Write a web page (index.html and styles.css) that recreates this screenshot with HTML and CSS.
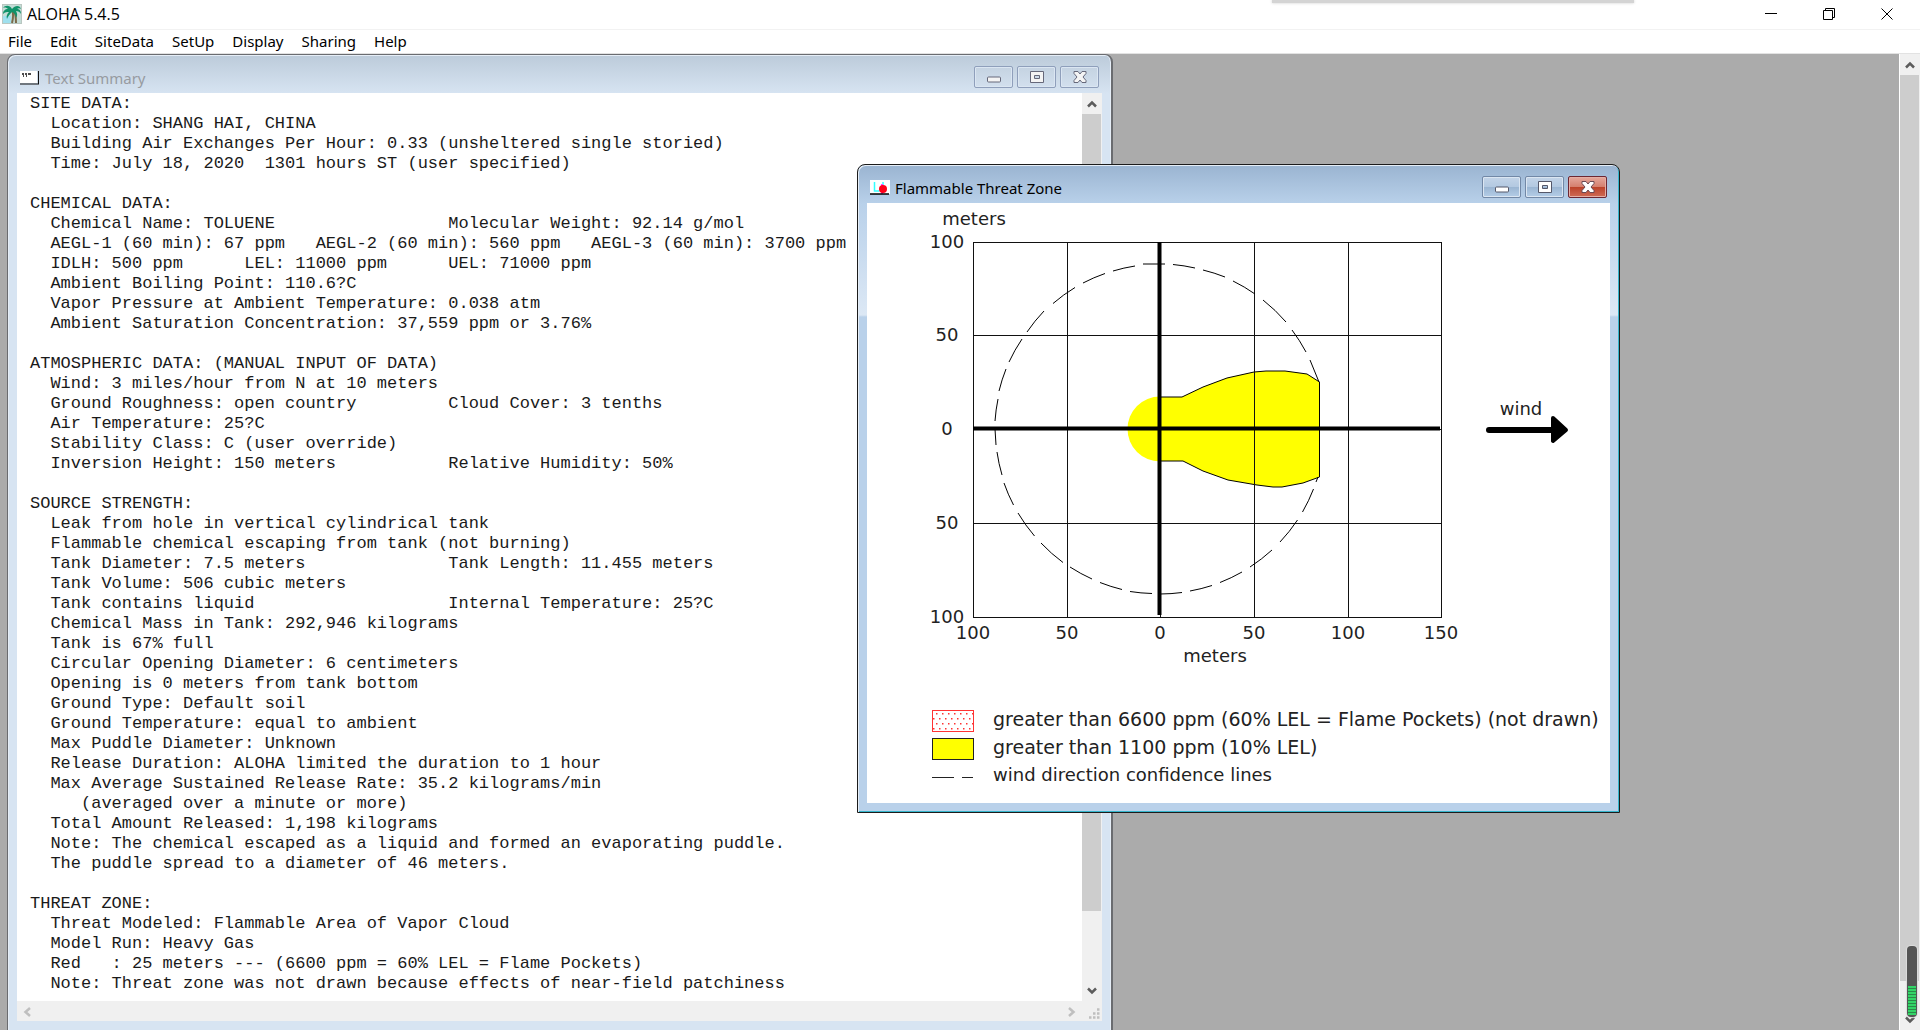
FILE: index.html
```html
<!DOCTYPE html>
<html lang="en">
<head>
    <meta charset="UTF-8">
    <meta name="viewport" content="width=device-width, initial-scale=1.0">
    <title>ALOHA 5.4.5</title>
    <link rel="stylesheet" href="styles.css">
</head>
<body>
    <!-- Title bar -->
    <header class="title-bar">
        <svg class="app-icon" viewBox="0 0 20 20">
            <rect width="20" height="20" fill="#b9c7c1"/>
            <rect x="1" y="1" width="18" height="18" fill="#c4dcd6"/>
            <path d="M1 12h8v7H1z" fill="#9fe0ee"/>
            <path d="M10 6c2 4 1 9 0 13M12 7c2 4 2 8 2 12" fill="none" stroke="#7b6a4a" stroke-width="2"/>
            <path d="M10 5C8 1 3 1 1 4c2-1 4 0 5 1-3 0-5 2-5 5 2-2 4-2 6-2-2 2-3 4-2 7 1-3 3-5 5-7 3 1 4 4 4 6 2-3 1-5 0-7 2 0 4 1 5 3 0-4-2-5-4-5 1-1 3-1 4 0-1-4-6-4-9 0z" fill="#12936a"/>
        </svg>
        <h1>ALOHA 5.4.5</h1>
        <div class="window-controls">
            <button type="button" aria-label="Minimize">
                <svg viewBox="0 0 12 12"><path d="M0 5.5h12" stroke="#000" fill="none"/></svg>
            </button>
            <button type="button" aria-label="Restore">
                <svg viewBox="0 0 12 12"><path d="M.5 2.5h9v9h-9zM2.500 2.500v-2h9v9h-2" stroke="#000" fill="none"/></svg>
            </button>
            <button type="button" aria-label="Close">
                <svg viewBox="0 0 12 12"><path d="M.5.5l11 11M11.500.5l-11 11" stroke="#000" fill="none"/></svg>
            </button>
        </div>
        <div class="behind-shadow"></div>
    </header>

    <nav class="menu-bar">
        <button type="button">File</button>
        <button type="button">Edit</button>
        <button type="button">SiteData</button>
        <button type="button">SetUp</button>
        <button type="button">Display</button>
        <button type="button">Sharing</button>
        <button type="button">Help</button>
    </nav>

    <main class="workspace">
        <div class="desktop">
            <!-- Text Summary window -->
            <section class="window summary-window">
                <div class="window-title">
                    <svg class="window-icon" viewBox="0 0 20 16">
                        <path d="M0 1h17v12H0z" fill="#fff"/>
                        <path d="M0 14h19M18.500 1v13" stroke="#111" fill="none"/>
                        <path d="M2 4h2M5 4h2M8 4h3M3 6h1M6 6h1" stroke="#111" stroke-width="1.500"/>
                    </svg>
                    <h2>Text Summary</h2>
                    <div class="frame-buttons">
                        <button type="button" aria-label="Minimize">
                            <svg viewBox="0 0 16 14"><rect x="1.500" y="7" width="13" height="5" rx="1" fill="#f4f4f4" stroke="#66687a"/></svg>
                        </button>
                        <button type="button" aria-label="Maximize">
                            <svg viewBox="0 0 16 14"><path d="M1.500 1.500h13v11h-13zM5.500 5.500v3h5v-3z" fill="#f4f4f4" stroke="#66687a" fill-rule="evenodd"/></svg>
                        </button>
                        <button type="button" aria-label="Close" class="frame-close">
                            <svg viewBox="0 0 16 14"><path d="M2 1.500h4l2 2.500 2-2.500h4v2L11 7l3 3.500v2h-4L8 10l-2 2.500H2v-2L5 7 2 3.500z" fill="#f4f4f4" stroke="#66687a"/></svg>
                        </button>
                    </div>
                </div>
                <div class="window-client summary-client">
<pre class="summary-text">SITE DATA:
  Location: SHANG HAI, CHINA
  Building Air Exchanges Per Hour: 0.33 (unsheltered single storied)
  Time: July 18, 2020  1301 hours ST (user specified)

CHEMICAL DATA:
  Chemical Name: TOLUENE                 Molecular Weight: 92.14 g/mol
  AEGL-1 (60 min): 67 ppm   AEGL-2 (60 min): 560 ppm   AEGL-3 (60 min): 3700 ppm
  IDLH: 500 ppm      LEL: 11000 ppm      UEL: 71000 ppm
  Ambient Boiling Point: 110.6?C
  Vapor Pressure at Ambient Temperature: 0.038 atm
  Ambient Saturation Concentration: 37,559 ppm or 3.76%

ATMOSPHERIC DATA: (MANUAL INPUT OF DATA)
  Wind: 3 miles/hour from N at 10 meters
  Ground Roughness: open country         Cloud Cover: 3 tenths
  Air Temperature: 25?C
  Stability Class: C (user override)
  Inversion Height: 150 meters           Relative Humidity: 50%

SOURCE STRENGTH:
  Leak from hole in vertical cylindrical tank
  Flammable chemical escaping from tank (not burning)
  Tank Diameter: 7.5 meters              Tank Length: 11.455 meters
  Tank Volume: 506 cubic meters
  Tank contains liquid                   Internal Temperature: 25?C
  Chemical Mass in Tank: 292,946 kilograms
  Tank is 67% full
  Circular Opening Diameter: 6 centimeters
  Opening is 0 meters from tank bottom
  Ground Type: Default soil
  Ground Temperature: equal to ambient
  Max Puddle Diameter: Unknown
  Release Duration: ALOHA limited the duration to 1 hour
  Max Average Sustained Release Rate: 35.2 kilograms/min
     (averaged over a minute or more)
  Total Amount Released: 1,198 kilograms
  Note: The chemical escaped as a liquid and formed an evaporating puddle.
  The puddle spread to a diameter of 46 meters.

THREAT ZONE:
  Threat Modeled: Flammable Area of Vapor Cloud
  Model Run: Heavy Gas
  Red   : 25 meters --- (6600 ppm = 60% LEL = Flame Pockets)
  Note: Threat zone was not drawn because effects of near-field patchiness</pre>
                    <div class="scrollbar">
                        <button type="button" aria-label="Scroll up">
                            <svg viewBox="0 0 10 10"><path d="M1 7.500l4-4 4 4" fill="none" stroke="#5c5c5c" stroke-width="2.500"/></svg>
                        </button>
                        <div class="scroll-track"><div class="scroll-thumb summary-thumb"></div></div>
                        <button type="button" aria-label="Scroll down">
                            <svg viewBox="0 0 10 10"><path d="M1 2.500l4 4 4-4" fill="none" stroke="#5c5c5c" stroke-width="2.500"/></svg>
                        </button>
                    </div>
                    <div class="scrollbar-horizontal">
                        <button type="button" aria-label="Scroll left">
                            <svg viewBox="0 0 10 10"><path d="M8 1L3.500 5 8 9" fill="none" stroke="#bfbfbf" stroke-width="2.500"/></svg>
                        </button>
                        <button type="button" aria-label="Scroll right">
                            <svg viewBox="0 0 10 10"><path d="M2 1l4.500 4L2 9" fill="none" stroke="#bfbfbf" stroke-width="2.500"/></svg>
                        </button>
                    </div>
                    <svg class="size-grip" viewBox="0 0 20 20">
                        <path d="M7 16.500h2.500M11 16.500h2.500M15 16.500h2.500M11 12.500h2.500M15 12.500h2.500M15 8.500h2.500" stroke="#bfbfbf" stroke-width="2.500"/>
                    </svg>
                </div>
            </section>

            <!-- Flammable Threat Zone window -->
            <section class="window threat-window active">
                <div class="window-title">
                    <svg class="window-icon" viewBox="0 0 20 16">
                        <path d="M0 0h20v14H0z" fill="#fff"/>
                        <path d="M4.500 2v9h5M13 2v4" stroke="#3ff" stroke-width="1.500" fill="none"/>
                        <path d="M12 4v10" stroke="#f4f" stroke-width="2"/>
                        <circle cx="13" cy="9" r="4" fill="#ff0018"/>
                        <path d="M0 14h19" stroke="#000" stroke-width="1.500"/>
                    </svg>
                    <h2>Flammable Threat Zone</h2>
                    <div class="frame-buttons">
                        <button type="button" aria-label="Minimize">
                            <svg viewBox="0 0 16 14"><rect x="1.500" y="7" width="13" height="5" rx="1" fill="#fff" stroke="#55586a"/></svg>
                        </button>
                        <button type="button" aria-label="Maximize">
                            <svg viewBox="0 0 16 14"><path d="M1.500 1.500h13v11h-13zM5.500 5.500v3h5v-3z" fill="#fff" stroke="#55586a" fill-rule="evenodd"/></svg>
                        </button>
                        <button type="button" aria-label="Close" class="frame-close">
                            <svg viewBox="0 0 16 14"><path d="M2 1.500h4l2 2.500 2-2.500h4v2L11 7l3 3.500v2h-4L8 10l-2 2.500H2v-2L5 7 2 3.500z" fill="#fff" stroke="#6a4a55"/></svg>
                        </button>
                    </div>
                </div>
                <div class="window-client">
                    <svg class="zone-chart" viewBox="0 0 743 490">
                        <!-- origin of the plot is at 293,226 -->
                        <g transform="translate(293 226)">
                            <path d="M0-32.500A32.500 32.500 0 0 0 0 32.500z" fill="#ff0"/>
                            <path d="M0-32H22L43-42 67-51 94-57 106-58H125L147-55 159.500-47V48L143 54 122 58H113L97 56 68 51 43 42 23 32H0" fill="#ff0" stroke="#000"/>
                        </g>
                        <g class="grid-lines">
                            <path d="M106.500 39.500H574.500V414.500H106.500z"/>
                            <path d="M200.500 39V414M293.500 39V414M387.500 39V414M481.500 39V414"/>
                            <path d="M106 132.500H575M106 226.500H575M106 320.500H575"/>
                        </g>
                        <path d="M292.500 39V412M106 225.500H573" stroke="#000" stroke-width="4" fill="none"/>
                        <!-- wind direction confidence lines -->
                        <g transform="translate(293 226)">
                            <path fill="none" stroke="#000" d="M159-47L150-69M146-77A165 165 0 0 0 132-99M126-107A165 165 0 0 0 103-129M95-135A165 165 0 0 0 73-148M65-152A165 165 0 0 0 43-159M35-161A165 165 0 0 0 13-164.500M5-165H-17M-25-163A165 165 0 0 0-47-158M-55-155.500A165 165 0 0 0-77-146M-85-141.500A165 165 0 0 0-107-125.500M-116-118A165 165 0 0 0-133-97M-138-90A165 165 0 0 0-151-67M-154-60A165 165 0 0 0-161-38M-162-30A165 165 0 0 0-165-8M-165 0L-164 16M-163 23A165 165 0 0 0-158 46M-156 54A165 165 0 0 0-146.500 76M-142 84A165 165 0 0 0-125.500 107M-119 114A165 165 0 0 0-97 133.500M-90 138A165 165 0 0 0-68 150M-60 153.500A165 165 0 0 0-38 160.500M-30 162.500A165 165 0 0 0-8 164.500M0 165A165 165 0 0 0 22 163.500M30 162A165 165 0 0 0 52 156.500M60 153.500A165 165 0 0 0 82 143M90 138A165 165 0 0 0 112 121M120 113A165 165 0 0 0 137.500 91M142.500 83A165 165 0 0 0 153.500 60M156 53L158 48"/>
                        </g>
                        <g class="chart-labels">
                            <text x="107" y="22">meters</text>
                            <text x="80" y="45">100</text>
                            <text x="80" y="138">50</text>
                            <text x="80" y="232">0</text>
                            <text x="80" y="326">50</text>
                            <text x="80" y="420">100</text>
                            <text x="106" y="436">100</text>
                            <text x="200" y="436">50</text>
                            <text x="293" y="436">0</text>
                            <text x="387" y="436">50</text>
                            <text x="481" y="436">100</text>
                            <text x="574" y="436">150</text>
                            <text x="348" y="459">meters</text>
                            <text x="654" y="212">wind</text>
                        </g>
                        <path d="M622 227H686" stroke="#000" stroke-width="6" stroke-linecap="round"/>
                        <path d="M686 215L699 227 686 238z" stroke="#000" stroke-width="4" stroke-linejoin="round"/>
                    </svg>
                    <ul class="legend">
                        <li class="zone-level">
                            <svg class="legend-key" viewBox="0 0 42 22">
                                <defs>
                                    <pattern id="redDots" width="6" height="10" patternUnits="userSpaceOnUse">
                                        <path d="M4 3h1.500v1.500H4zM1 8h1.500v1.500H1z" fill="#f33"/>
                                    </pattern>
                                </defs>
                                <rect x=".5" y=".5" width="41" height="21" fill="url(#redDots)" stroke="#f33"/>
                            </svg>
                            greater than 6600 ppm (60% LEL = Flame Pockets) (not drawn)
                        </li>
                        <li class="zone-level">
                            <svg class="legend-key" viewBox="0 0 42 22">
                                <rect x=".5" y=".5" width="41" height="21" fill="#ff0" stroke="#222"/>
                            </svg>
                            greater than 1100 ppm (10% LEL)
                        </li>
                        <li>
                            <svg class="legend-key" viewBox="0 0 42 22">
                                <path d="M0 11.500h22M30 11.500h11" stroke="#222"/>
                            </svg>
                            wind direction confidence lines
                        </li>
                    </ul>
                </div>
            </section>
        </div>

        <div class="scrollbar main-scrollbar">
            <button type="button" aria-label="Scroll up">
                <svg viewBox="0 0 10 10"><path d="M1 7.500l4-4 4 4" fill="none" stroke="#5c5c5c" stroke-width="2.500"/></svg>
            </button>
            <div class="scroll-track"><div class="scroll-thumb main-thumb"></div></div>
            <button type="button" aria-label="Scroll down">
                <svg viewBox="0 0 10 10"><path d="M1 2.500l4 4 4-4" fill="none" stroke="#5c5c5c" stroke-width="2.500"/></svg>
            </button>
        </div>
        <div class="level-meter"><div class="level"></div></div>
    </main>
</body>
</html>
```
FILE: styles.css
```css
* {
    margin: 0;
    padding: 0;
    box-sizing: border-box;
}

body {
    display: flex;
    flex-direction: column;
    height: 100vh;
    overflow: hidden;
    background: #fff;
    color: #000;
    font-family: 'Noto Sans', 'Open Sans', sans-serif;
    font-size: 15px;
}

button {
    border: none;
    background: none;
    font: inherit;
    color: inherit;
}

svg {
    display: block;
}

/* Title bar */
.title-bar {
    position: relative;
    display: flex;
    align-items: center;
    height: 30px;
    padding: 0 4px 2px 2px;
    border-bottom: 1px solid #f2f2f2;
}

.app-icon {
    width: 20px;
    height: 20px;
    margin-right: 5px;
}

.title-bar h1 {
    font-family: 'Open Sans', sans-serif;
    font-size: 16px;
    font-weight: 400;
    line-height: 26px;
}

.window-controls {
    display: flex;
    margin-left: auto;
}

.window-controls button {
    display: flex;
    align-items: center;
    justify-content: center;
    width: 58px;
    height: 26px;
}

.window-controls svg {
    width: 12px;
    height: 12px;
}

.behind-shadow {
    position: absolute;
    top: 0;
    right: 286px;
    width: 362px;
    height: 3px;
    background: #d4d4d4;
    box-shadow: 0 0 3px #ccc;
}

/* Menu */
.menu-bar {
    display: flex;
    align-items: flex-start;
    gap: 18px;
    height: 24px;
    padding-left: 8px;
    border-bottom: 1px solid #e2e2e2;
}

.menu-bar button {
    line-height: 22px;
}

/* Workspace */
.workspace {
    position: relative;
    display: flex;
    flex: 1;
    min-height: 0;
}

.desktop {
    position: relative;
    flex: 1;
    overflow: hidden;
    background: #ababab;
}

.window {
    position: absolute;
    display: flex;
    flex-direction: column;
    padding: 0 9px;
    border: 1px solid #6a6c70;
    border-radius: 8px 8px 0 0;
    background: linear-gradient(#bccbda, #d7e4f2 39px);
    box-shadow: inset 1px 1px 0 #e6eef7, inset -1px 0 0 #e6eef7;
}

.window.active {
    border-color: #1c1c1c;
    background: linear-gradient(#9ab4d1, #b9d1ea 39px, #dce8f5 150px, #b9d1ea 152px);
    box-shadow: inset 1px 1px 0 #e6eef7, inset -1px -1px 0 #35b5cc;
}

.summary-window {
    top: 0;
    bottom: -1px;
    left: 7px;
    width: 1106px;
    padding-bottom: 9px;
    border-right-width: 2px;
}

.threat-window {
    top: 110px;
    left: 857px;
    width: 763px;
    padding-bottom: 9px;
}

.window-title {
    display: flex;
    align-items: center;
    height: 38px;
    padding: 8px 3px 0 3px;
}

.window-icon {
    width: 20px;
    height: 16px;
    margin-right: 5px;
}

.window-title h2 {
    font-size: 15px;
    font-weight: 400;
    line-height: 20px;
}

.summary-window h2 {
    color: #979ba1;
}

.frame-buttons {
    display: flex;
    gap: 4px;
    margin-left: auto;
}

.frame-buttons button {
    display: flex;
    align-items: center;
    justify-content: center;
    width: 39px;
    height: 22px;
    margin-bottom: 2px;
    border: 1px solid #8f9fbb;
    border-radius: 2px;
    box-shadow: inset 0 0 0 1px #dbe6f2;
}

.frame-buttons svg {
    width: 16px;
    height: 14px;
}

.active .frame-buttons button {
    border-color: #7288a6;
    background: linear-gradient(#c3d4e8, #b3c9e1 48%, #9ab5d2 50%, #b4cde7);
}

.active .frame-buttons .frame-close {
    border-color: #6d2733;
    background: linear-gradient(#e5a89d, #d5806f 48%, #bb4129 50%, #cf6b55);
    box-shadow: inset 0 0 0 1px #e5aea5;
}

.window-client {
    background: #fff;
}

/* Text summary */
.summary-client {
    display: grid;
    grid-template-columns: 1fr 20px;
    grid-template-rows: 1fr 20px;
    flex: 1;
    min-height: 0;
}

.summary-text {
    padding: 1px 0 0 13px;
    overflow: hidden;
    color: #1a1a1a;
    font-family: 'Liberation Mono', monospace;
    font-size: 17px;
    line-height: 20px;
}

.scrollbar {
    display: flex;
    flex-direction: column;
    min-height: 0;
    background: #f0f0f0;
}

.scrollbar button,
.scrollbar-horizontal button {
    display: flex;
    align-items: center;
    justify-content: center;
    width: 20px;
    height: 21px;
}

.scrollbar button svg,
.scrollbar-horizontal button svg {
    width: 10px;
    height: 10px;
}

.scroll-track {
    flex: 1;
    padding-right: 1px;
}

.scroll-thumb {
    background: #cdcdcd;
}

.summary-thumb {
    height: 92%;
}

.main-thumb {
    height: 97%;
}

.scrollbar-horizontal {
    display: flex;
    justify-content: space-between;
    background: #f0f0f0;
}

.size-grip {
    width: 20px;
    height: 20px;
    background: #f0f0f0;
}

.main-scrollbar {
    width: 21px;
    border-left: 1px solid #fff;
}

.level-meter {
    position: absolute;
    right: 3px;
    bottom: 13px;
    width: 10px;
    height: 71px;
    padding: 40px 1px 2px;
    border-radius: 4px;
    background: #555;
    box-shadow: 0 0 1px 1px #ddd;
}

.level {
    height: 100%;
    background: repeating-linear-gradient(#33d467 0 2px, #2a8a49 2px 3px);
}

/* Threat zone plot */
.zone-chart {
    width: 100%;
}

.grid-lines {
    fill: none;
    stroke: #111;
    shape-rendering: crispEdges;
}

.chart-labels text {
    fill: #222;
    font-family: 'DejaVu Sans', sans-serif;
    font-size: 18px;
    text-anchor: middle;
}

.legend {
    padding: 14px 0 12px 65px;
    color: #222;
    font-family: 'DejaVu Sans', sans-serif;
    font-size: 18px;
    list-style: none;
}

.legend li {
    display: flex;
    gap: 19px;
    min-height: 28px;
    line-height: 24px;
    white-space: nowrap;
}

.legend .zone-level {
    font-size: 19px;
}

.legend-key {
    flex: none;
    width: 42px;
    height: 22px;
    margin-top: 3px;
}
```
